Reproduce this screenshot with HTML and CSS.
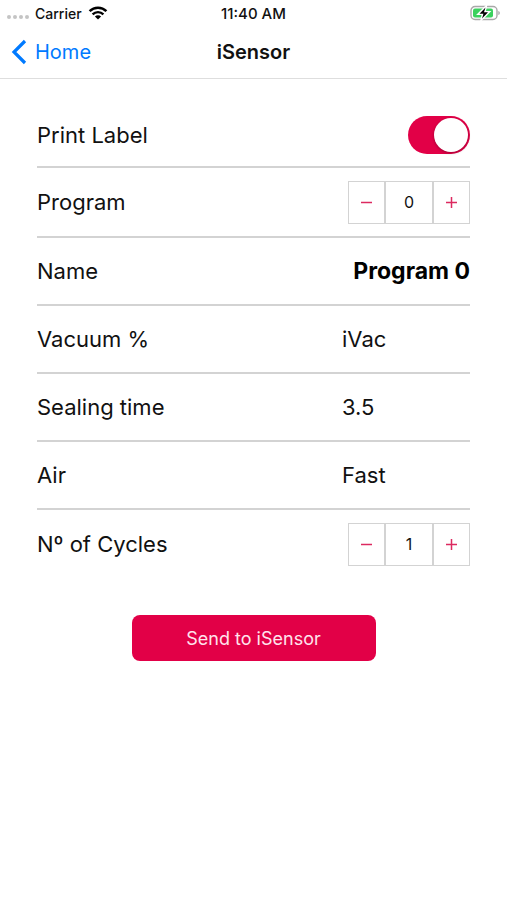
FILE: index.html
```
<!DOCTYPE html>
<html lang="en">
<head>
    <meta charset="UTF-8">
    <meta name="viewport" content="width=device-width, initial-scale=1.0">
    <title>iSensor</title>
    <link rel="stylesheet" href="styles.css">
</head>
<body>
    <header class="header">
        <div class="status-bar">
            <div class="carrier">
                <span class="signal"><i></i><i></i><i></i><i></i></span>
                <span>Carrier</span>
                <svg class="wifi" width="20" height="14" viewBox="0 0 20 14" aria-hidden="true">
                    <path d="M1.6 5.2a12 12 0 0 1 16.8 0" fill="none" stroke="#000" stroke-width="2.5"/>
                    <path d="M4.6 8.3a7.7 7.7 0 0 1 10.8 0" fill="none" stroke="#000" stroke-width="2.4"/>
                    <path d="M10 13.6 6.9 10.5a4.4 4.4 0 0 1 6.2 0z"/>
                </svg>
            </div>
            <div class="time">11:40 AM</div>
            <svg class="battery" width="30" height="16" viewBox="0 0 30 16" aria-hidden="true">
                <rect x="1" y="1.5" width="26" height="13" rx="4" fill="#fff" stroke="#a8a8a8" stroke-width="1.4"/>
                <path d="M28.3 6v4c1-.3 1.5-1 1.5-2s-.5-1.7-1.5-2z" fill="#a8a8a8"/>
                <rect x="3" y="3.5" width="20" height="9" rx="2" fill="#3bd15e"/>
                <path d="M16 1.5 8.5 9h4.3L11.5 14.5 19 7h-4.3z" stroke="#fff" stroke-width="2"/>
                <path d="M15.5 2.5 9.5 8.7h4L12 13.5 18 7.3h-4z"/>
            </svg>
        </div>
        <nav class="nav">
            <a class="back" href="#">
                <svg width="16" height="26" viewBox="0 0 16 26" aria-hidden="true">
                    <path d="M14 2 3 13l11 11" fill="none" stroke="#007aff" stroke-width="3.2"/>
                </svg>
                Home
            </a>
            <h1>iSensor</h1>
        </nav>
    </header>

    <form class="form">
        <div class="row row-first">
            <label for="printLabel">Print Label</label>
            <input type="checkbox" class="switch" id="printLabel" checked>
        </div>
        <div class="row row-program">
            <label for="program">Program</label>
            <div class="stepper">
                <button type="button" data-step="-1" aria-label="Previous program"><svg width="11" height="11"><path d="M0 5.5h11"/></svg></button>
                <input type="text" id="program" value="0" readonly>
                <button type="button" data-step="1" aria-label="Next program"><svg width="11" height="11"><path d="M0 5.5h11M5.5 0v11"/></svg></button>
            </div>
        </div>
        <div class="row">
            <label for="name">Name</label>
            <output class="value name" id="name">Program 0</output>
        </div>
        <div class="row">
            <label for="vacuum">Vacuum %</label>
            <output class="value" id="vacuum">iVac</output>
        </div>
        <div class="row">
            <label for="sealing">Sealing time</label>
            <output class="value" id="sealing">3.5</output>
        </div>
        <div class="row">
            <label for="air">Air</label>
            <output class="value" id="air">Fast</output>
        </div>
        <div class="row row-last">
            <label for="cycles">Nº of Cycles</label>
            <div class="stepper">
                <button type="button" data-step="-1" aria-label="Fewer cycles"><svg width="11" height="11"><path d="M0 5.5h11"/></svg></button>
                <input type="text" id="cycles" value="1" readonly>
                <button type="button" data-step="1" aria-label="More cycles"><svg width="11" height="11"><path d="M0 5.5h11M5.5 0v11"/></svg></button>
            </div>
        </div>
        <button type="button" class="send">Send to iSensor</button>
    </form>

    <script>
        document.querySelectorAll(".stepper button").forEach(function(btn){
            btn.addEventListener("click", function(){
                let input = btn.parentElement.querySelector("input");
                let next = Number(input.value) + Number(btn.dataset.step);
                if (next >= 0) {
                    input.value = next;
                }
                if (input.id == "program") {
                    document.getElementById("name").value = "Program " + input.value;
                }
            });
        });
    </script>
</body>
</html>
```
FILE: styles.css
```
* {
    box-sizing: border-box;
}

body {
    margin: 0;
    background: #fff;
    color: #111;
    font-family: Inter, "Liberation Sans", sans-serif;
}

input, button {
    font-family: inherit;
    margin: 0;
    padding: 0;
}

/* Status bar and navigation */
.header {
    border-bottom: 1px solid #dedede;
}

.status-bar {
    display: grid;
    grid-template-columns: 1fr auto 1fr;
    align-items: center;
    height: 26px;
    padding: 0 7px;
    font-size: 14px;
    font-weight: 500;
}

.time {
    font-size: 15px;
}

.carrier {
    display: flex;
    align-items: center;
    gap: 6px;
}

.signal {
    display: flex;
    gap: 2px;
    padding-top: 8px;
}

.signal i {
    width: 4px;
    height: 4px;
    border-radius: 50%;
    background: #c4c4c4;
}

.battery {
    justify-self: end;
}

.nav {
    display: grid;
    grid-template-columns: 1fr auto 1fr;
    align-items: center;
    height: 52px;
    padding: 0 11px;
}

.nav h1 {
    margin: 0;
    font-size: 20px;
    font-weight: 600;
}

.back {
    display: flex;
    align-items: center;
    gap: 8px;
    color: #007aff;
    font-size: 20px;
    text-decoration: none;
}

/* Settings */
.form {
    padding: 24px 37px;
}

.row {
    display: flex;
    align-items: center;
    justify-content: space-between;
    height: 68px;
    border-bottom: 2px solid #d3d3d3;
    font-size: 22px;
}

.row-first {
    height: 65px;
}

.row-program {
    height: 70px;
}

.row-last {
    border-bottom: none;
}

.value {
    width: 128px;
}

.name {
    color: #000;
    font-size: 23px;
    font-weight: 700;
    text-align: right;
    white-space: nowrap;
}

.switch {
    appearance: none;
    display: flex;
    align-items: center;
    justify-content: flex-end;
    width: 62px;
    height: 38px;
    padding: 2px;
    border-radius: 19px;
    background: #e20047;
}

.switch::before {
    content: "";
    width: 34px;
    height: 34px;
    border-radius: 50%;
    background: #fff;
    box-shadow: 0 1px 3px rgba(0, 0, 0, 0.3);
}

.switch:not(:checked) {
    justify-content: flex-start;
    background: #ddd;
}

.stepper {
    display: flex;
    width: 122px;
    height: 43px;
    border: 1px solid #d3d3d3;
}

.stepper button {
    display: flex;
    align-items: center;
    justify-content: center;
    width: 35px;
    border: none;
    background: #fff;
}

.stepper path {
    fill: none;
    stroke: #dc2a60;
    stroke-width: 1.5;
}

.stepper input {
    flex: 1;
    min-width: 0;
    border: solid #d3d3d3;
    border-width: 0 2px;
    border-radius: 0;
    background: #fff;
    color: #111;
    font-size: 16px;
    text-align: center;
}

.send {
    display: block;
    width: 244px;
    height: 46px;
    margin: 37px auto 0;
    border: none;
    border-radius: 8px;
    background: #e20047;
    color: #ffe3ec;
    font-size: 18px;
}
```
